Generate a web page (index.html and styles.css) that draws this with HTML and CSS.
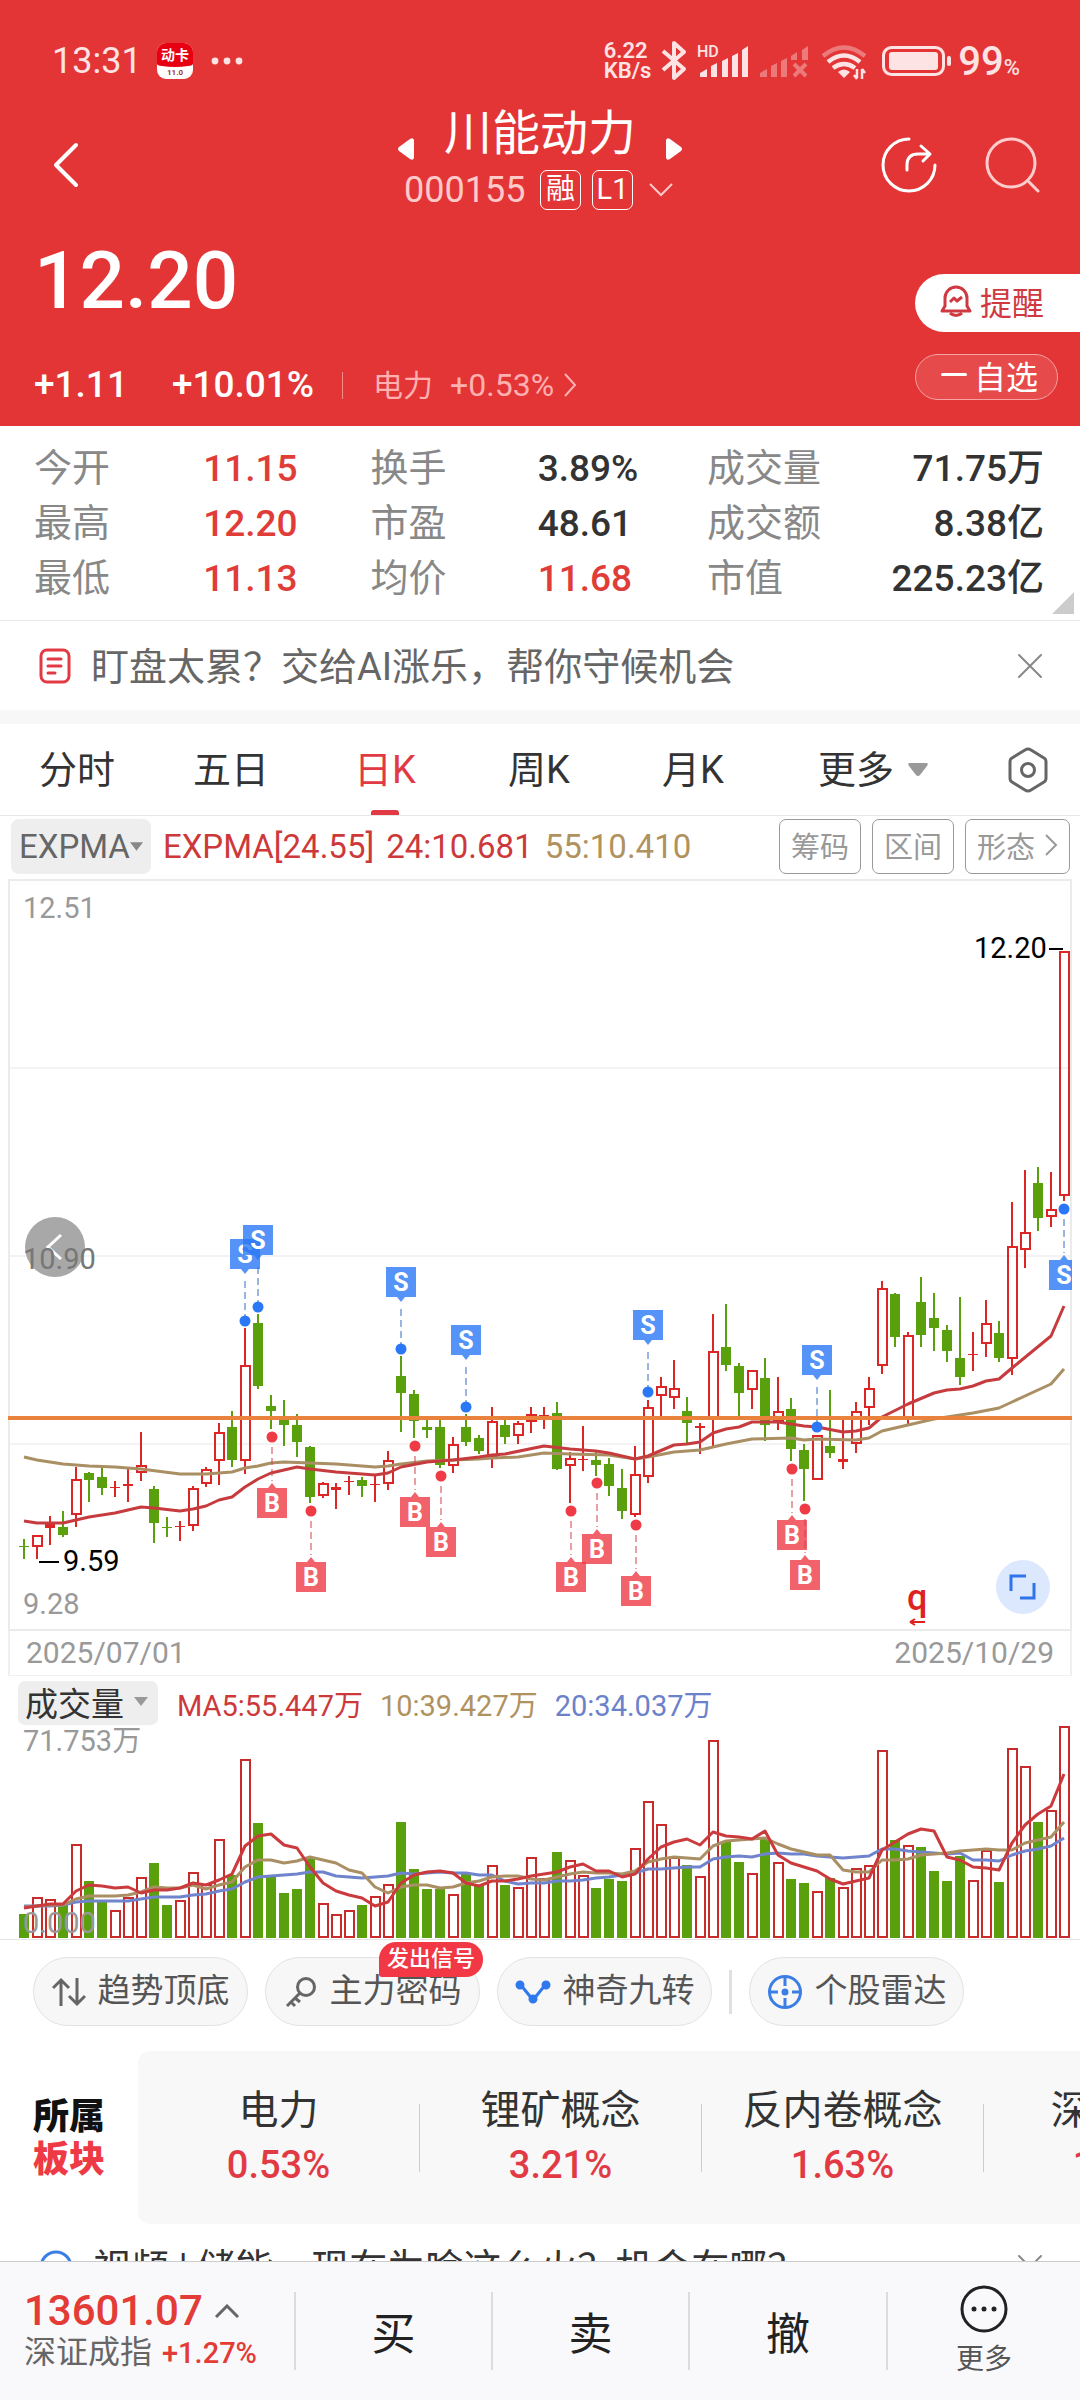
FILE: index.html
```html
<!DOCTYPE html>
<html lang="zh-CN">
<head>
<meta charset="utf-8">
<meta name="viewport" content="width=device-width, initial-scale=1">
<title>川能动力 000155</title>
<link rel="stylesheet" href="styles.css">
</head>
<body>
<div class="app">
  <main class="content">
    <header class="hero">
      <div class="status">
        <time class="clock">13:31</time>
        <div class="app-icon"><b>动卡</b><i>11.0</i></div>
        <svg class="dots" width="32" height="8" viewBox="0 0 32 8" fill="currentColor"><circle cx="4" cy="4" r="3.4"/><circle cx="16" cy="4" r="3.4"/><circle cx="28" cy="4" r="3.4"/></svg>
        <div class="rate"><span>6.22</span><span>KB/s</span></div>
        <svg class="sys" width="210" height="44" viewBox="660 39 210 44" fill="none" stroke="currentColor">
          <path d="M663 51l21 18-10 9V43l10 9-21 18" stroke-width="4" stroke-linejoin="round"/>
          <text x="697" y="57" class="hd">HD</text>
          <g fill="currentColor" stroke="none">
            <path d="M700 77v-4l7-4v8zM711 77V66l6-3v14zM722 77V61l6-3v19zM732 77V56l6-3v24zM742 77V50l6-4v31z"/>
            <path opacity=".4" d="M760 77v-4l7-4v8zM771 77V66l6-3v14zM781 77V61l6-3v19zM791 60v-4l6-4v8zM802 60V50l6-4v14z"/>
            <path d="M844 78l-6-6q6-5 12 0z"/>
          </g>
          <path opacity=".4" d="M794 64l12 12m0-12l-12 12" stroke-width="4"/>
          <path opacity=".4" d="M823 56q21-17 42 0" stroke-width="4.500"/>
          <path d="M828 62q16-13 32 0M833 68q11-8 22 0" stroke-width="4.500"/>
          <path d="M857 69v9m-3-3l3 4M862 79V69m3 4l-3-4" stroke-width="2.500"/>
        </svg>
        <svg class="battery" width="70" height="30" viewBox="0 0 70 30"><rect x="1.500" y="1.500" width="60" height="27" rx="8" fill="none" stroke="currentColor" stroke-width="3"/><rect x="7" y="6" width="49" height="18" rx="3" fill="currentColor"/><rect x="65" y="10" width="4" height="10" rx="2" fill="currentColor"/></svg>
        <span class="level">99<small>%</small></span>
      </div>

      <div class="bar">
        <button class="icon-btn back" aria-label="返回"><svg width="28" height="46" viewBox="0 0 28 46" fill="none" stroke="currentColor" stroke-width="4" stroke-linecap="round" stroke-linejoin="round"><path d="M24 3L4 23l20 20"/></svg></button>
        <button class="icon-btn step" aria-label="上一只"><svg width="16" height="22" viewBox="0 0 16 22" fill="currentColor"><path d="M16 2v18q-1 3-4 1L1 13q-2-2 0-4l11-8q3-2 4 1z"/></svg></button>
        <div class="name">
          <h1>川能动力</h1>
          <div class="code"><span>000155</span><em>融</em><em>L1</em><svg width="24" height="14" viewBox="0 0 24 14" fill="none" stroke="currentColor" stroke-width="2"><path d="M1 1l11 11L23 1"/></svg></div>
        </div>
        <button class="icon-btn step" aria-label="下一只"><svg width="16" height="22" viewBox="0 0 16 22" fill="currentColor"><path d="M0 2v18q1 3 4 1l11-8q2-2 0-4L4 1Q1-1 0 2z"/></svg></button>
        <div class="tools">
          <button class="icon-btn" aria-label="分享"><svg width="56" height="56" viewBox="0 0 56 56" fill="none" stroke="currentColor" stroke-width="3" stroke-linecap="round" stroke-linejoin="round"><path d="M28 2A26 26 0 1 0 54 28"/><path d="M26 33v-5q0-11 11-11h11M40 9l9 8-7 7"/></svg></button>
          <button class="icon-btn" aria-label="搜索"><svg width="56" height="56" viewBox="0 0 56 56" fill="none" stroke="#fcc" stroke-width="3" stroke-linecap="round"><circle cx="27" cy="26" r="24"/><path d="M45 45l9 9"/></svg></button>
        </div>
      </div>

      <div class="quote">
        <div>
          <p class="price">12.20</p>
          <p class="change"><b>+1.11</b><b>+10.01%</b><a href="#power"><span>电力</span>+0.53%<svg width="14" height="26" viewBox="0 0 14 26" fill="none" stroke="currentColor" stroke-width="2"><path d="M2 2l10 11L2 24"/></svg></a></p>
        </div>
        <div class="actions">
          <button class="remind"><svg width="32" height="34" viewBox="0 0 32 34" fill="none" stroke="currentColor" stroke-width="3" stroke-linejoin="round"><path d="M2 27l3-5v-8a11 11 0 0 1 22 0v8l3 5z"/><path d="M10 29q6 5 12 0M10 18l4-4 3 3 5-4"/></svg>提醒</button>
          <button class="fav"><i></i>自选</button>
        </div>
      </div>
    </header>

    <dl class="stats">
      <dt>今开</dt><dd class="up">11.15</dd><dt>换手</dt><dd>3.89%</dd><dt>成交量</dt><dd>71.75万</dd>
      <dt>最高</dt><dd class="up">12.20</dd><dt>市盈</dt><dd>48.61</dd><dt>成交额</dt><dd>8.38亿</dd>
      <dt>最低</dt><dd class="up">11.13</dd><dt>均价</dt><dd class="up">11.68</dd><dt>市值</dt><dd>225.23亿</dd>
    </dl>

    <div class="notice">
      <svg width="32" height="36" viewBox="0 0 32 36" fill="none" stroke="#e23a45" stroke-width="3" stroke-linecap="round"><rect x="2" y="2" width="28" height="32" rx="6"/><path d="M9 11h13M9 18h13M9 25h7"/></svg>
      <a href="#ai">盯盘太累？交给AI涨乐，帮你守候机会</a>
      <button class="icon-btn close" aria-label="关闭"><svg width="26" height="26" viewBox="0 0 26 26" fill="none" stroke="#888" stroke-width="2" stroke-linecap="round"><path d="M2 2l22 22M24 2L2 24"/></svg></button>
    </div>

    <nav class="tabs">
      <button>分时</button><button>五日</button><button class="on">日K</button><button>周K</button><button>月K</button>
      <button>更多<svg width="20" height="13" viewBox="0 0 20 13" fill="#999"><path d="M2 0h16q3 0 1 3l-7 9q-2 2-4 0L1 3Q-1 0 2 0z"/></svg></button>
      <button aria-label="设置"><svg width="42" height="46" viewBox="0 0 42 46" fill="none" stroke="#666" stroke-width="3" stroke-linejoin="round"><path d="M18 3q3-2 6 0l13 8q2 1 2 4v16q0 3-2 4l-13 8q-3 2-6 0L5 35q-2-1-2-4V15q0-3 2-4z"/><circle cx="21" cy="23" r="6.500"/></svg></button>
    </nav>

    <div class="indicator">
      <button class="pick">EXPMA<svg width="13" height="9" viewBox="0 0 14 9" fill="#888"><path d="M0 0h14L7 9z"/></svg></button>
      <span class="c-red">EXPMA[24.55]</span><span class="c-red">24:10.681</span><span class="c-tan">55:10.410</span>
      <div class="pills"><button>筹码</button><button>区间</button><button>形态<svg width="14" height="24" viewBox="0 0 14 24" fill="none" stroke="#999" stroke-width="2"><path d="M2 2l10 10L2 22"/></svg></button></div>
    </div>

    <svg class="chart" id="kline" viewBox="0 0 1080 753" role="img" aria-label="日K线">
      <g fill="none" stroke="#ebebeb" stroke-width="2">
        <path d="M9 753V2h1062v751"/><path d="M9 752h1062"/>
        <path stroke="#f3f3f3" d="M10 190h1060M10 378h1060M10 566h1060"/>
      </g>
      <circle cx="55" cy="369" r="30" fill="#a8a8a8"/>
      <path d="M61 357L48 369l13 12" fill="none" stroke="#fff" stroke-width="3"/>
      <g id="candles"></g>
      <g id="averages" fill="none" stroke-width="3" stroke-linejoin="round"></g>
      <path d="M8 540h1064" stroke="#e8823c" stroke-width="4"/>
      <g id="signals"></g>
      <g class="axis">
        <text x="23" y="40">12.51</text><text x="23" y="391" class="mid">10.90</text><text x="23" y="736">9.28</text>
        <text x="63" y="693" class="ink">9.59</text><text x="974" y="80" class="ink">12.20</text>
        <path d="M39 684h20M1049 71h14" stroke="#000" stroke-width="2"/>
      </g>
      <text x="907" y="732" class="event">q</text>
      <path d="M910 744h15m-15 0l5-3m-5 3l5 3" fill="none" stroke="#d22" stroke-width="2"/>
      <circle cx="1023" cy="709" r="27" fill="#dce8fd"/>
      <path d="M1026 698h-15v15M1020 720h14v-15" fill="none" stroke="#2f74ea" stroke-width="3"/>
    </svg>
    <div class="dates"><time>2025/07/01</time><time>2025/10/29</time></div>
    <section class="volume">
      <div class="legend"><button>成交量<svg width="14" height="9" viewBox="0 0 14 9" fill="#999"><path d="M0 0h14L7 9z"/></svg></button><span class="c-red">MA5:55.447万</span><span class="c-tan">10:39.427万</span><span class="c-blue">20:34.037万</span></div>
      <svg class="chart" viewBox="0 5 1080 214" role="img" aria-label="成交量">
        <g id="bars"></g>
        <g class="axis"><text x="23" y="31">71.753万</text><text x="23" y="213">0.000</text></g>
        <g id="volume-averages" fill="none" stroke-width="3" stroke-linejoin="round"></g>
      </svg>
    </section>

    <div class="chips">
      <button><svg width="34" height="30" viewBox="0 0 34 30" fill="none" stroke="#666" stroke-width="3"><path d="M9 29V3M1 11l8-8 8 8M25 1v26M17 19l8 8 8-8"/></svg>趋势顶底</button>
      <button><svg width="34" height="34" viewBox="0 0 34 34" fill="none" stroke="#666" stroke-width="3"><circle cx="22" cy="12" r="8.500"/><path d="M16 18L3 31M7 27l4 4M11 23l5 4"/></svg>主力密码<span class="flag">发出信号</span></button>
      <button><svg width="36" height="26" viewBox="0 0 36 26" fill="#2f78ee" stroke="#2f78ee" stroke-width="3"><path fill="none" d="M5 5l13 16L31 5"/><circle cx="5" cy="6" r="3"/><circle cx="18" cy="20" r="3"/><circle cx="31" cy="6" r="3"/></svg>神奇九转</button>
      <i class="rule"></i>
      <button><svg width="36" height="36" viewBox="0 0 36 36" fill="none" stroke="#3b7fe6" stroke-width="3"><circle cx="18" cy="18" r="15.500"/><path d="M18 3v9M18 24v9M3 18h8M25 18h8"/><circle cx="18" cy="18" r="2" fill="#3b7fe6"/></svg>个股雷达</button>
    </div>

    <section class="sectors">
      <h2>所属<b>板块</b></h2>
      <div class="strip">
        <a href="#power">电力<b>0.53%</b></a>
        <a href="#lithium">锂矿概念<b>3.21%</b></a>
        <a href="#involution">反内卷概念<b>1.63%</b></a>
        <a href="#sz500">深成500<b>1.85%</b></a>
      </div>
    </section>

    <div class="notice news">
      <svg width="34" height="34" viewBox="0 0 34 34" fill="none" stroke="#3b7fe6" stroke-width="3"><circle cx="17" cy="17" r="15"/></svg>
      <a href="#news">视频 | 储能，现在为啥这么火？机会在哪？</a>
      <button class="icon-btn close" aria-label="关闭"><svg width="26" height="26" viewBox="0 0 26 26" fill="none" stroke="#888" stroke-width="2" stroke-linecap="round"><path d="M2 2l22 22M24 2L2 24"/></svg></button>
    </div>
  </main>

  <footer class="dock">
    <a class="index" href="#index"><span class="points">13601.07<svg width="24" height="14" viewBox="0 0 24 14" fill="none" stroke="#666" stroke-width="3"><path d="M1 13L12 2l11 11"/></svg></span><span class="label">深证成指<b>+1.27%</b></span></a>
    <button>买</button><button>卖</button><button>撤</button>
    <button class="more"><svg width="50" height="50" viewBox="0 0 50 50" fill="none" stroke="#222" stroke-width="3"><circle cx="25" cy="25" r="22"/><g fill="#222" stroke="none"><circle cx="15" cy="25" r="2.500"/><circle cx="25" cy="25" r="2.500"/><circle cx="35" cy="25" r="2.500"/></g></svg>更多</button>
  </footer>
</div>
<script src="chart.js"></script>
</body>
</html>
```
FILE: styles.css
```css
* { box-sizing: border-box; margin: 0; padding: 0; }
body { font-family: Roboto, "Noto Sans CJK SC", sans-serif; color: #333; background: #fff; }
button { font: inherit; color: inherit; background: none; border: 0; cursor: pointer; }
a { color: inherit; text-decoration: none; }
em, i { font-style: normal; }
svg { display: block; flex: none; }

.app { display: flex; flex-direction: column; height: 100vh; }
.content { flex: 1; min-height: 0; overflow: hidden; }

/* header */
.hero { background: #e33536; color: #fff; }
.status { display: flex; align-items: center; height: 91px; padding: 31px 56px 0 52px; color: #fde3e3; }
.clock { font-size: 36px; width: 105px; white-space: nowrap; }
.app-icon { width: 36px; height: 36px; border-radius: 9px; overflow: hidden; background: #fff; text-align: center; display: flex; flex-direction: column; }
.app-icon b { background: #e60012; color: #fff; font-size: 14px; line-height: 24px; border-radius: 0 0 18px 18px / 0 0 3px 3px; }
.app-icon i { color: #a33; font-size: 8px; line-height: 12px; font-weight: 700; }
.dots { margin-left: 18px; }
.rate { display: flex; flex-direction: column; margin-left: auto; margin-right: 9px; font-size: 22px; line-height: 20px; font-weight: 600; }
.hd { font-size: 16px; font-weight: 500; fill: currentColor; stroke: none; }
.battery { margin-left: 12px; }
.level { font-size: 40px; font-weight: 500; margin-left: 6px; margin-right: 4px; white-space: nowrap; }
.level small { font-size: 22px; }

.bar { display: grid; grid-template-columns: 1fr auto auto auto 1fr; align-items: center; padding: 12px 40px 0; }
.icon-btn { display: flex; align-items: center; }
.back, .tools { margin-top: 16px; }
.back { padding-left: 12px; }
.step { align-self: start; margin-top: 35px; }
.name { width: 252px; }
.name h1 { padding-top: 2px; font-size: 48px; line-height: 58px; font-weight: 400; text-align: center; }
.code { display: flex; align-items: center; gap: 11px; margin: 7px -10px 0; font-size: 36px; line-height: 40px; color: #ffc9c9; }
.code em { width: 41px; height: 40px; border: 1px solid #fff; border-radius: 7px; font-size: 29px; line-height: 37px; text-align: center; color: #fff; }
.code svg { margin-left: 5px; }
.code span { width: 125px; }
.tools { display: flex; justify-content: flex-end; gap: 47px; }

.quote { display: flex; justify-content: space-between; padding: 24px 0 21px 34px; }
.price { font-size: 80px; line-height: 94px; font-weight: 500; }
.change { display: flex; align-items: center; gap: 44px; margin-top: 37px; font-size: 37px; line-height: 40px; }
.change b { font-weight: 500; }
.change a { display: flex; align-items: center; gap: 9px; margin-left: -16px; padding-left: 30px; border-left: 1px solid #f58b8b; font-size: 32px; line-height: 27px; color: #ffb0b0; }
.change span { font-size: 30px; margin-right: 8px; }
.actions { display: flex; flex-direction: column; width: 165px; padding-top: 40px; gap: 22px; }
.actions button { display: flex; align-items: center; font-size: 32px; }
.remind { height: 58px; gap: 8px; padding: 0 0 4px 25px; color: #cf3a42; background: #fff; border-radius: 29px 0 0 29px; }
.actions .fav { width: 143px; height: 46px; gap: 7px; padding: 0 0 5px 25px; border: 1px solid #f5a3a3; border-radius: 23px; background: #e64a4b; }
.fav i { width: 26px; height: 3px; background: #fff; border-radius: 2px; }

/* figures */
.stats { display: grid; grid-template-columns: 170fr 168fr 168fr 170fr 110fr 224fr; position: relative; padding: 15px 36px 14px 34px; border-bottom: 1px solid #e8e8e8; font-size: 38px; line-height: 55px; }
.stats::after { content: ""; position: absolute; right: 6px; bottom: 6px; border: 11px solid #ccc; border-top-color: transparent; border-left-color: transparent; }
.stats dt { color: #888; white-space: nowrap; }
.stats dd { font-weight: 500; font-size: 37px; white-space: nowrap; }
.stats dd:nth-of-type(3n) { text-align: right; }
.stats .up { color: #e03c38; }

.notice { display: flex; align-items: center; height: 89px; padding: 0 37px 0 39px; font-size: 38px; color: #666; white-space: nowrap; }
.notice a { margin-left: 20px; padding-bottom: 5px; }
.notice .close { margin-left: auto; }

.tabs { display: grid; grid-template-columns: repeat(5, 154fr) 206fr 104fr; height: 106px; border-top: 14px solid #f7f7f7; border-bottom: 1px solid #e8e8e8; font-size: 38px; }
.tabs button { display: flex; align-items: center; justify-content: center; gap: 14px; position: relative; padding-bottom: 6px; }
.tabs svg { margin-top: 6px; }
.tabs .on { color: #e23a45; }
.tabs .on::after { content: ""; position: absolute; bottom: 0; width: 28px; height: 5px; border-radius: 3px 3px 0 0; background: #e23a45; }

.indicator { display: flex; align-items: center; gap: 12px; padding: 3px 10px 4px 11px; font-size: 33px; white-space: nowrap; }
.pick { display: flex; align-items: center; height: 55px; padding: 0 8px; background: #eee; border-radius: 8px; color: #666; }
.c-red { color: #cd393b; }
.c-tan { color: #b0925f; }
.c-blue { color: #6b82cb; }
.pills { display: flex; gap: 11px; margin-left: auto; }
.pills button { display: flex; align-items: center; gap: 9px; height: 55px; padding: 0 11px 4px; border: 1px solid #999; border-radius: 7px; font-size: 29px; color: #999; }

/* charts */
.chart { width: 100%; height: auto; }
.chart .axis { font-size: 29px; fill: #999; }
.chart .ink { fill: #000; }
.chart .mid { fill: #777; }
.event { font-size: 36px; font-weight: 500; fill: #d22; }
.mark { font-size: 25px; font-weight: 700; fill: #fff; text-anchor: middle; }
.dates { display: flex; justify-content: space-between; margin: 0 8px; padding: 0 16px; font-size: 30px; line-height: 44px; color: #999; border: solid #f0f0f0; border-width: 0 2px 1px; }
.volume { border-bottom: 1px solid #e4e4e4; }
.legend { display: flex; align-items: center; gap: 17px; padding: 5px 18px 0; font-size: 29px; white-space: nowrap; }
.legend button { display: flex; align-items: center; gap: 10px; height: 44px; padding: 0 10px 3px 7px; margin-right: 2px; background: #eee; border-radius: 7px; font-size: 33px; }

/* tools */
.chips { display: flex; align-items: center; gap: 17px; margin: 17px 33px 25px; font-size: 33px; color: #555; }
.chips button { display: flex; align-items: center; justify-content: center; gap: 12px; position: relative; width: 215px; height: 69px; padding-bottom: 8px; border: 1px solid #e2e2e2; border-radius: 35px; background: #f7f7f7; white-space: nowrap; }
.chips svg { margin-top: 9px; }
.rule { width: 3px; height: 44px; background: #e0e0e0; }
.flag { position: absolute; right: -4px; top: -16px; height: 35px; padding: 0 8px; border-radius: 17px 17px 17px 3px; background: #f23745; color: #fff; font-size: 22px; line-height: 33px; font-weight: 500; }

.sectors { display: flex; align-items: center; }
.sectors h2 { flex: none; width: 138px; padding: 3px 0 0 33px; font-size: 36px; line-height: 43px; font-weight: 900; color: #111; }
.sectors h2 b { display: block; color: #ee3a44; }
.strip { display: flex; flex: 1; align-items: center; height: 173px; overflow: hidden; background: #f8f8f8; border-radius: 12px 0 0 12px; font-size: 40px; }
.strip a { flex: none; width: 282px; height: 68px; display: flex; flex-direction: column; justify-content: center; text-align: center; line-height: 54px; border-right: 1px solid #ccc; }
.strip b { font-weight: 500; font-size: 38px; color: #e23a45; }
.news { height: 86px; color: #333; }

/* dock */
.dock { display: grid; grid-template-columns: 294fr 197fr 197fr 198fr 194fr; grid-template-rows: 100%; flex: none; height: 139px; padding: 30px 0; background: #f9f9fc; border-top: 1px solid #ccc; }
.dock button { display: flex; align-items: center; justify-content: center; font-size: 44px; color: #222; border-left: 2px solid #dcdce0; }
.index { display: flex; flex-direction: column; justify-content: center; padding-left: 24px; white-space: nowrap; }
.points { display: flex; align-items: center; gap: 12px; font-size: 42px; line-height: 42px; font-weight: 500; color: #e33c36; }
.label { font-size: 32px; line-height: 40px; color: #666; }
.label b { margin-left: 10px; font-size: 29px; font-weight: 500; color: #e33c36; }
.dock .more { flex-direction: column; gap: 8px; font-size: 28px; line-height: 36px; color: #555; }
```
FILE: chart.js
```js
// Each row: direction (1 rising, 0 falling), high, body top, body bottom, low, volume top.
const days = [
  [0,661,668,668,681,194],[1,658,658,668,681,177],[1,638,646,650,667,179],[0,633,649,657,659,183],
  [1,589,602,636,649,124],[0,594,595,602,624,161],[0,588,599,610,617,181],[1,603,609,609,619,190],
  [1,589,606,608,624,177],[1,554,588,594,603,157],[0,608,611,645,665,143],[0,639,649,649,659,185],
  [1,643,648,648,663,180],[1,608,611,647,653,152],[1,589,592,605,609,164],[1,545,555,582,607,119],
  [0,533,549,582,589,155],[1,450,488,582,596,39],[0,436,445,508,511,103],[0,517,528,533,551,155],
  [0,522,542,547,568,173],[0,536,547,564,579,169],[0,568,569,619,625,137],[1,604,606,617,620,183],
  [1,605,609,612,631,194],[1,598,603,603,617,190],[0,599,602,608,619,185],[1,597,606,606,624,176],
  [1,573,583,605,612,164],[0,478,498,515,554,102],[0,512,516,543,560,149],[0,541,549,552,560,169],
  [0,541,549,587,590,169],[1,559,567,587,595,174],[0,536,549,564,568,153],[0,557,560,573,576,166],
  [1,529,544,578,590,145],[0,541,547,559,566,165],[1,543,546,557,566,167],[1,529,537,543,555,137],
  [1,529,537,539,551,158],[0,524,535,591,592,132],[1,574,581,587,625,140],[1,548,581,581,593,155],
  [0,574,582,587,598,168],[0,580,586,608,618,159],[0,591,610,633,641,161],[1,568,597,636,639,128],
  [1,522,530,598,605,81],[1,499,509,517,540,104],[1,482,511,519,531,137],[0,519,533,545,565,145],
  [1,545,548,550,576,156],[1,436,474,539,570,20],[0,426,469,487,493,122],[0,485,488,515,539,142],
  [1,493,493,511,531,153],[0,480,500,547,563,118],[1,499,534,543,552,142],[0,520,531,571,583,159],
  [0,566,572,591,623,163],[1,558,558,601,601,171],[0,512,568,575,580,158],[1,541,581,584,591,167],
  [1,524,534,565,575,148],[1,499,511,529,547,145],[1,403,411,487,496,30],[0,415,416,459,469,120],
  [1,454,458,539,547,125],[0,399,424,457,469,127],[0,415,440,450,473,151],[0,447,452,473,484,161],
  [0,419,480,499,507,136],[1,454,476,476,493,160],[1,422,446,465,479,130],[0,443,455,480,484,162],
  [1,324,369,480,497,28],[1,292,355,371,390,46],[0,289,305,340,353,102],[1,294,332,338,349,90],
  [1,74,74,317,323,6]
];
const RED = '#dc2626', GREEN = '#5a9f0c';
const x = i => 24 + i * 13;
const put = (id, markup) => { document.getElementById(id).innerHTML = markup; };

put('candles', days.map(([up, high, top, bottom, low], i) => {
  const c = x(i), color = up ? RED : GREEN, tall = bottom - top;
  const wick = up && tall > 4 ? `M${c} ${high}V${top}M${c} ${bottom}V${low}` : `M${c} ${high}V${low}`;
  const body = tall < 5
    ? `<rect x="${c - 5}" y="${top}" width="10" height="${Math.max(tall, 1)}" fill="${color}"/>`
    : up ? `<rect x="${c - 4}" y="${top}" width="9" height="${tall}" fill="none" stroke="${color}" stroke-width="2"/>`
         : `<rect x="${c - 5}" y="${top}" width="10" height="${tall}" fill="${color}"/>`;
  return `<path d="${wick}" stroke="${color}" stroke-width="2"/>${body}`;
}).join(''));

// Day index and height pairs for the two price averages.
const fast = [0,643,1,645,3,645,5,639,7,635,9,629,10,630,12,633,13,631,14,628,15,622,16,619,17,609,18,601,19,595,21,589,22,591,24,594,26,596,27,597,28,595,29,589,31,584,33,582,35,579,36,577,37,576,40,568,42,571,44,573,45,575,47,581,48,578,50,567,51,566,52,564,53,555,54,551,55,549,56,544,58,544,60,548,61,549,63,554,64,553,65,550,66,539,68,526,70,515,71,512,72,511,73,508,74,503,75,501,76,490,79,458,80,428];
const slow = [0,579,1,582,3,586,5,588,7,589,9,591,12,596,14,596,16,594,17,590,18,588,19,585,20,584,22,585,24,586,26,588,27,589,28,588,29,586,31,583,35,581,36,580,38,579,40,575,42,576,45,577,46,579,47,581,48,579,50,574,52,572,53,569,54,566,56,561,59,560,60,562,61,561,64,562,65,560,66,553,68,547,70,541,73,535,75,530,76,524,79,506,80,491];
const line = (list, color) => {
  let points = '';
  for (let k = 0; k < list.length; k += 2) points += `${x(list[k])},${list[k + 1]} `;
  return `<polyline points="${points}" stroke="${color}"/>`;
};
put('averages', line(slow, '#a98f63') + line(fast, '#c63c3e'));

// Signal: letter, day, dot height, and whether the tag hangs below the dot.
const signals = [['S',17,443,0],['S',18,429,0],['B',19,559,1],['B',22,633,1],['S',29,471,0],['B',30,568,1],['B',32,598,1],['S',34,529,0],['B',42,633,1],['B',44,605,1],['B',47,647,1],['S',48,514,0],['B',59,591,1],['B',60,631,1],['S',61,549,0],['S',80,331,1]];
put('signals', '<clipPath id="plot"><path d="M8 0h1064v753H8z"/></clipPath><g clip-path="url(#plot)">' + signals.map(([letter, day, y, below]) => {
  const c = x(day) + (letter === 'B' ? 1 : 0), sell = letter === 'S';
  const fill = sell ? '#2a78f6' : '#ef3b46', box = below ? y + 51 : y - 82;
  const dash = below ? `M${c} ${y + 10}V${y + 44}` : `M${c} ${y - 40}V${y - 5}`;
  const tag = below
    ? `M${c - 15} ${box}h11l4-5 4 5h11v30h-30z`
    : `M${c - 15} ${box}h30v30h-11l-4 5-4-5h-11z`;
  return `<path d="${dash}" stroke="${sell ? '#2f6fc4' : '#d0404a'}" stroke-dasharray="7 4"/>
    <circle cx="${c}" cy="${y}" r="5.500" fill="${fill}"/>
    <path d="${tag}" fill="${fill}" fill-opacity=".8"/>
    <text class="mark" x="${c}" y="${box + 24}">${letter}</text>`;
}).join('') + '</g>');

put('bars', days.map(([up, , , , , top], i) => {
  const c = x(i);
  return up
    ? `<rect x="${c - 4}" y="${top + 1}" width="9" height="${216 - top}" fill="none" stroke="#c92a2a" stroke-width="2"/>`
    : `<rect x="${c - 5}" y="${top}" width="10" height="${218 - top}" fill="${GREEN}"/>`;
}).join(''));

// Moving average of the volume heights; days before the window count as 186.
const average = (n, color) => line(days.flatMap((_, i) => {
  let sum = 0;
  for (let k = i - n + 1; k <= i; k++) sum += k < 0 ? 186 : days[k][5];
  return [i, Math.round(sum / n)];
}), color);
put('volume-averages', average(20, '#6f84cc') + average(10, '#a98f63') + average(5, '#cb3a3c'));
```
